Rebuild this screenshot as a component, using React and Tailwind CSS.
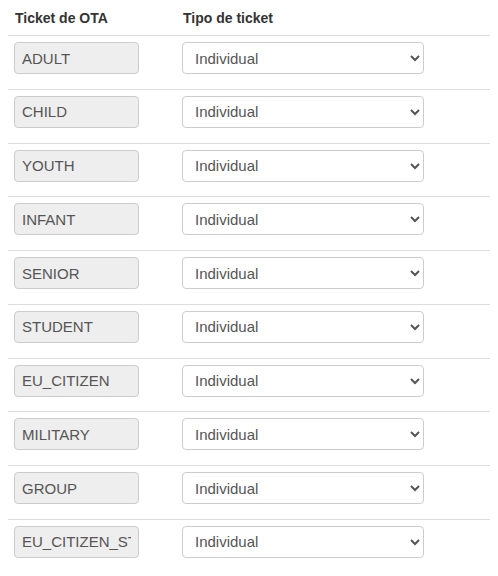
import React from 'react';

const TICKETS = ['ADULT', 'CHILD', 'YOUTH', 'INFANT', 'SENIOR', 'STUDENT', 'EU_CITIZEN', 'MILITARY', 'GROUP', 'EU_CITIZEN_STUDENT'];

const App = () => {
  return (
    <div className="min-h-[576px] bg-white px-2 font-['Liberation_Sans',Arial,sans-serif] text-[#333]">
      {/* Header */}
      <div className="flex h-[35px] items-end pb-[7px] text-[14px] font-bold leading-5">
        <div className="w-[168px] pl-[7px]">Ticket de OTA</div>
        <div className="pl-[7px]">Tipo de ticket</div>
      </div>

      {/* Rows */}
      {TICKETS.map((t) => (
        <div key={t} className="flex h-[53.78px] border-t border-[#ddd] pt-[6px]">
          <div className="w-[168px] pl-[6px]">
            <input
              readOnly
              value={t}
              className="h-[32px] w-[125px] rounded border border-[#ccc] bg-[#eee] px-[7px] text-[15px] text-[#555] outline-none"
            />
          </div>
          <div className="pl-[6px]">
            <select
              defaultValue="Individual"
              className="h-[32px] w-[242px] rounded border border-[#ccc] bg-white pl-[8px] pr-[8px] text-[15px] text-[#555] outline-none"
            >
              <option>Individual</option>
              <option>Grupo</option>
            </select>
          </div>
        </div>
      ))}
    </div>
  );
};

export default App;
